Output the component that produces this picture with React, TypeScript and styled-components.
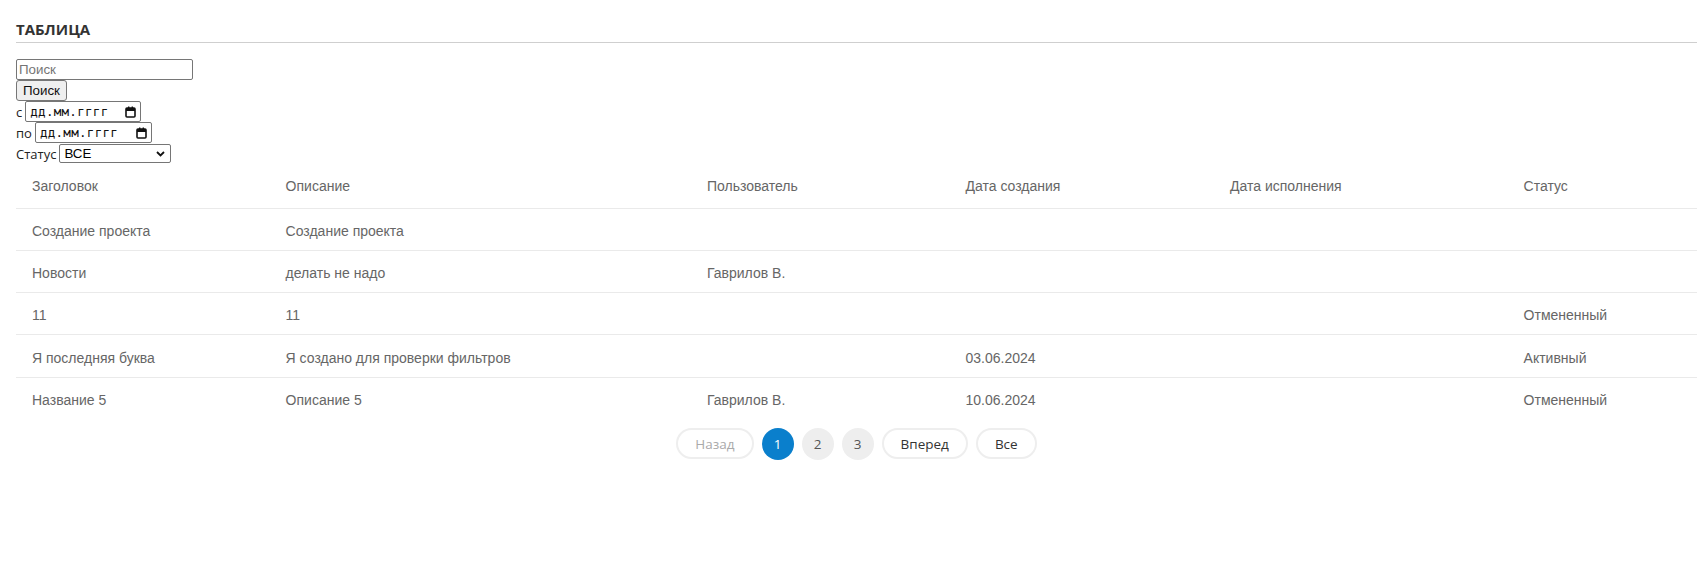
import React from "react";
import styled, { createGlobalStyle } from "styled-components";

const GlobalStyle = createGlobalStyle`
  html, body { margin: 0; padding: 0; background: #fff; }
  body { font-family: "Open Sans", "Liberation Sans", Arial, sans-serif; color: #222; }
  * { box-sizing: border-box; }
`;

const Page = styled.div`
  padding: 19px 6px 40px 16px;
`;

const Title = styled.h2`
  margin: 0;
  font-family: "Open Sans", Arial, sans-serif;
  font-weight: 700;
  font-size: 15px;
  line-height: 20px;
  color: #333;
  padding-bottom: 3px;
  border-bottom: 1px solid #cfcfcf;
`;

const Filters = styled.div`
  margin-top: 16px;
  display: flex;
  flex-direction: column;
  align-items: flex-start;
`;

const ControlFont = `
  font-family: "Liberation Sans", Arial, sans-serif;
  font-size: 13.33px;
  font-weight: 400;
`;

const SearchInput = styled.input`
  ${ControlFont}
  width: 177px;
  height: 21px;
  border: 1px solid #767676;
  border-radius: 2px;
  padding: 1px 2px;
  color: #000;
  outline: none;
  &::placeholder { color: #757575; }
`;

const Button = styled.button`
  ${ControlFont}
  height: 21px;
  padding: 1px 6px;
  background: #efefef;
  border: 1px solid #767676;
  border-radius: 3px;
  color: #111;
  line-height: 17px;
`;

const Row = styled.div`
  display: flex;
  align-items: center;
  gap: 3px;
  height: 21px;
`;

const Label = styled.span`
  font-family: "Open Sans", Arial, sans-serif;
  font-size: 13px;
  color: #222;
`;

const DateBox = styled.div<{ $w: number }>`
  width: ${(p) => p.$w}px;
  height: 21px;
  border: 1px solid #767676;
  border-radius: 2px;
  display: flex;
  align-items: center;
  justify-content: space-between;
  padding: 0 4px 0 4px;
  background: #fff;
`;

const DateText = styled.span`
  font-family: "DejaVu Sans Mono", monospace;
  font-size: 12.5px;
  color: #111;
  letter-spacing: 0.3px;
`;

const SelectBox = styled.div`
  width: 112px;
  height: 19px;
  border: 1px solid #767676;
  border-radius: 2px;
  display: flex;
  align-items: center;
  justify-content: space-between;
  padding: 0 5px 0 4px;
  ${ControlFont}
  color: #000;
`;

const Table = styled.table`
  width: 100%;
  margin-top: 2px;
  border-collapse: collapse;
  table-layout: fixed;
  font-family: "Liberation Sans", Arial, sans-serif;
  font-size: 14px;
  color: #666;
`;

const Th = styled.th`
  text-align: left;
  font-weight: 400;
  height: 42px;
  padding: 0 16px 2px;
  border-bottom: 1px solid #eaeaea;
  color: #666;
`;

const Td = styled.td<{ $last?: boolean }>`
  height: 42.3px;
  padding: 3px 16px 0;
  border-bottom: ${(p) => (p.$last ? "none" : "1px solid #eaeaea")};
`;

const Pager = styled.div`
  display: flex;
  justify-content: center;
  gap: 8px;
  margin-top: 9px;
`;

const Pill = styled.button<{ $disabled?: boolean }>`
  height: 31px;
  padding: 0 17px;
  border: 2px solid #eee;
  border-radius: 16px;
  background: #fff;
  font-family: "Open Sans", Arial, sans-serif;
  font-size: 13.5px;
  color: ${(p) => (p.$disabled ? "#aaa" : "#333")};
`;

const PageDot = styled.button<{ $active?: boolean }>`
  width: 32px;
  height: 32px;
  border-radius: 50%;
  border: none;
  padding: 0;
  background: ${(p) => (p.$active ? "#0a7fcc" : "#eeeeee")};
  color: ${(p) => (p.$active ? "#fff" : "#555")};
  font-family: "Open Sans", Arial, sans-serif;
  font-size: 13.5px;
`;

const CalendarIcon = () => (
  <svg width="11" height="12" viewBox="0 0 11 12">
    <rect x="1" y="2" width="9" height="9" fill="none" stroke="#111" strokeWidth="1.6" rx="1" />
    <rect x="1" y="2" width="9" height="3" fill="#111" />
    <rect x="3" y="0.5" width="1.4" height="2" fill="#111" />
    <rect x="6.6" y="0.5" width="1.4" height="2" fill="#111" />
  </svg>
);

const Chevron = () => (
  <svg width="9" height="6" viewBox="0 0 9 6">
    <polyline points="1,1 4.5,4.5 8,1" fill="none" stroke="#111" strokeWidth="1.8" />
  </svg>
);

const cols = [253.6, 421.4, 258.5, 264.5, 293.6, 189.4];
const headers = ["Заголовок", "Описание", "Пользователь", "Дата создания", "Дата исполнения", "Статус"];
const rows = [
  ["Создание проекта", "Создание проекта", "", "", "", ""],
  ["Новости", "делать не надо", "Гаврилов В.", "", "", ""],
  ["11", "11", "", "", "", "Отмененный"],
  ["Я последняя буква", "Я создано для проверки фильтров", "", "03.06.2024", "", "Активный"],
  ["Название 5", "Описание 5", "Гаврилов В.", "10.06.2024", "", "Отмененный"],
];

export default function App() {
  return (
    <Page>
      <GlobalStyle />
      <Title>ТАБЛИЦА</Title>
      <Filters>
        <SearchInput placeholder="Поиск" />
        <Button>Поиск</Button>
        <Row>
          <Label>с</Label>
          <DateBox $w={116}>
            <DateText>дд.мм.гггг</DateText>
            <CalendarIcon />
          </DateBox>
        </Row>
        <Row>
          <Label>по</Label>
          <DateBox $w={117}>
            <DateText>дд.мм.гггг</DateText>
            <CalendarIcon />
          </DateBox>
        </Row>
        <Row>
          <Label>Статус</Label>
          <SelectBox>
            <span>ВСЕ</span>
            <Chevron />
          </SelectBox>
        </Row>
      </Filters>
      <Table>
        <colgroup>
          {cols.map((w, i) => (
            <col key={i} style={{ width: w }} />
          ))}
        </colgroup>
        <thead>
          <tr>
            {headers.map((h) => (
              <Th key={h}>{h}</Th>
            ))}
          </tr>
        </thead>
        <tbody>
          {rows.map((r, i) => (
            <tr key={i}>
              {r.map((c, j) => (
                <Td key={j} $last={i === rows.length - 1}>
                  {c}
                </Td>
              ))}
            </tr>
          ))}
        </tbody>
      </Table>
      <Pager>
        <Pill $disabled>Назад</Pill>
        <PageDot $active>1</PageDot>
        <PageDot>2</PageDot>
        <PageDot>3</PageDot>
        <Pill>Вперед</Pill>
        <Pill>Все</Pill>
      </Pager>
    </Page>
  );
}
